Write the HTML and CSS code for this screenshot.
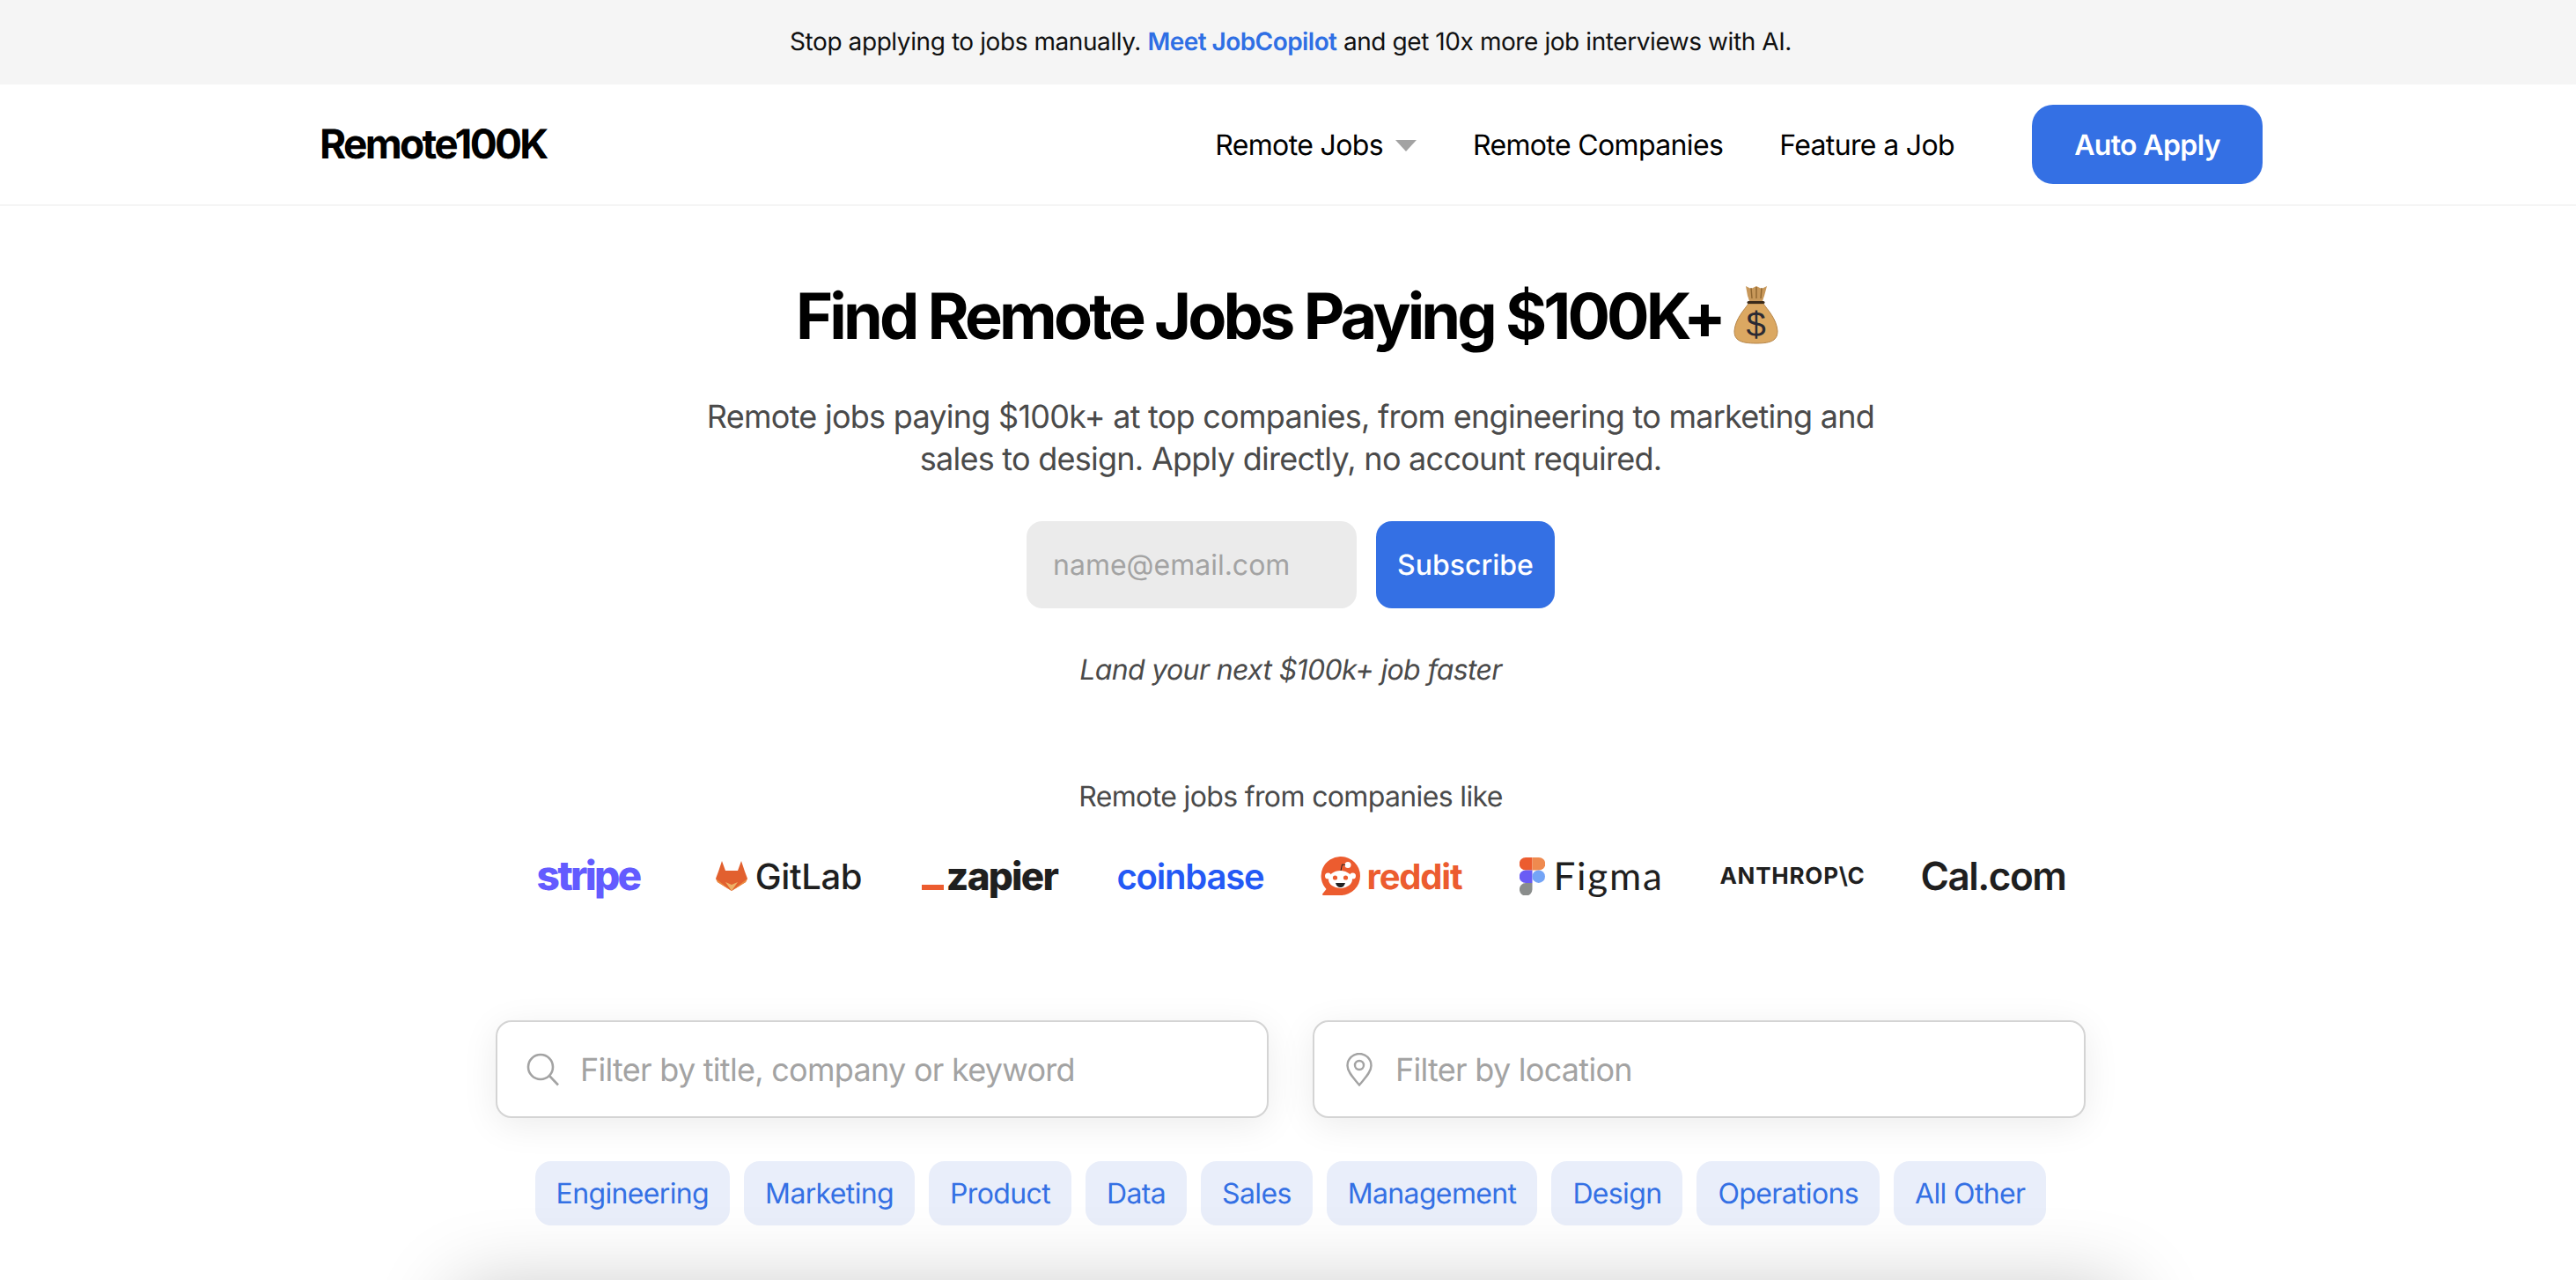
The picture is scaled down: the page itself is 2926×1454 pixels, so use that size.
FILE: index.html
```html
<!DOCTYPE html>
<html lang="en">
<head>
<meta charset="utf-8">
<title>Remote100K</title>
<link rel="stylesheet" href="styles.css">
</head>
<body>
<div class="page">
  <div class="banner">Stop applying to jobs manually.&nbsp;<a class="banner-link" href="#">Meet JobCopilot</a>&nbsp;and get 10x more job interviews with AI.</div>
  <header class="topbar">
    <nav class="nav">
      <a class="brand" href="#">Remote100K</a>
      <div class="nav-links">
        <a class="nav-link" href="#">Remote Jobs<span class="caret"></span></a>
        <a class="nav-link" href="#">Remote Companies</a>
        <a class="nav-link" href="#">Feature a Job</a>
        <a class="cta" href="#">Auto Apply</a>
      </div>
    </nav>
  </header>
  <main class="main">
    <h1 class="title">Find Remote Jobs Paying $100K+<svg class="bag" viewBox="0 0 51 66" aria-hidden="true">
      <path d="M14 1 20 4 26 1 32 4 38 1 35 12C34 15 33 17 33 19H18C18 17 17 15 16 12Z" fill="#c8985a"/>
      <path d="M20 3 21 15M26 2V15M32 3 31 15" stroke="#8f6630" stroke-width="1.4" fill="none"/>
      <path d="M17 21H34C38 27 49 38 50 52 50 62 44 66 26 66 7 66 1 62 1 52 2 38 13 27 17 21Z" fill="#dba862" stroke="#b5854a" stroke-width="1"/>
      <path d="M17 19.5H34" stroke="#3a2a1a" stroke-width="3" stroke-linecap="round"/>
      <text class="bag-sign" x="25.5" y="58" text-anchor="middle">$</text>
    </svg></h1>
    <p class="lead">Remote jobs paying $100k+ at top companies, from engineering to marketing and<br>sales to design. Apply directly, no account required.</p>
    <form class="subscribe">
      <input class="email" type="text" placeholder="name@email.com">
      <button class="subscribe-btn" type="button">Subscribe</button>
    </form>
    <p class="tagline">Land your next $100k+ job faster</p>
    <p class="like">Remote jobs from companies like</p>
    <div class="logos">
      <div class="logo"><span class="l-stripe">stripe</span></div>
      <div class="logo logo-gitlab">
        <svg class="m-gitlab" viewBox="0 0 36 34" aria-hidden="true">
          <path d="M7 0 11 11H25L29 0 33 12 36 20 34 24 18 34 2 24 0 20 3 12Z" fill="#e2602f"/>
          <path d="M0 20 18 34 36 20 34 24 18 34 2 24Z" fill="#ec8a3e"/>
          <path d="M11 24 18 34 25 24 18 27Z" fill="#edb066"/>
        </svg>
        <span class="l-gitlab">GitLab</span>
      </div>
      <div class="logo logo-zapier"><span class="zap-bar"></span><span class="l-zapier">zapier</span></div>
      <div class="logo"><span class="l-coinbase">coinbase</span></div>
      <div class="logo logo-reddit">
        <svg class="m-reddit" viewBox="0 0 45 44" aria-hidden="true">
          <path d="M23 0A22 22 0 1 1 23 44H3C2 44 1.500 43 2.500 42L6.500 37A22 22 0 0 1 23 0Z" fill="#ec5c2f"/>
          <ellipse cx="22.500" cy="26" rx="13.500" ry="10" fill="#fff"/>
          <circle cx="8.500" cy="22" r="3.500" fill="#fff"/>
          <circle cx="36.500" cy="22" r="3.500" fill="#fff"/>
          <circle cx="31" cy="9.500" r="3.500" fill="#fff"/>
          <path d="M23 16 24.500 9 28 9.500" stroke="#222" stroke-width="1" fill="none"/>
          <circle cx="16.500" cy="24" r="2.600" fill="#ec5c2f"/>
          <circle cx="28.500" cy="24" r="2.600" fill="#ec5c2f"/>
          <path d="M17 30H28C27 33.500 25 35 22.500 35 20 35 18 33.500 17 30Z" fill="#222"/>
        </svg>
        <span class="l-reddit">reddit</span>
      </div>
      <div class="logo logo-figma">
        <svg class="m-figma" viewBox="0 0 29 43" aria-hidden="true">
          <path d="M7 0H14.500V14.500H7A7.200 7.200 0 0 1 7 0Z" fill="#ec5c2f"/>
          <path d="M14.500 0H22A7.200 7.200 0 0 1 22 14.500H14.500Z" fill="#ef8a4f"/>
          <path d="M7 14.500H14.500V29H7A7.200 7.200 0 0 1 7 14.500Z" fill="#6a5cf5"/>
          <circle cx="21.700" cy="21.700" r="7.300" fill="#74a4f6"/>
          <path d="M7 29H14.500V36A7.300 7.300 0 1 1 7 29Z" fill="#8a8d8c"/>
        </svg>
        <span class="l-figma">Figma</span>
      </div>
      <div class="logo"><span class="l-anthropic">ANTHROP\C</span></div>
      <div class="logo"><span class="l-cal">Cal.com</span></div>
    </div>
    <div class="filters">
      <label class="filter">
        <svg class="filter-icon" viewBox="0 0 38 38" aria-hidden="true"><circle cx="16" cy="16" r="14" fill="none" stroke="#a3a3a3" stroke-width="2.600"/><path d="M26.500 26.500 36 36.500" stroke="#a3a3a3" stroke-width="2.600" fill="none"/></svg>
        <input class="filter-input" type="text" placeholder="Filter by title, company or keyword">
      </label>
      <label class="filter filter-loc">
        <svg class="filter-icon pin" viewBox="0 0 30 38" aria-hidden="true"><path d="M15 36.500C9 29 1.500 22 1.500 14.500A13.500 13.500 0 0 1 28.500 14.500C28.500 22 21 29 15 36.500Z" fill="none" stroke="#a3a3a3" stroke-width="2.400"/><circle cx="15" cy="14" r="5" fill="none" stroke="#a3a3a3" stroke-width="2.400"/></svg>
        <input class="filter-input" type="text" placeholder="Filter by location">
      </label>
    </div>
    <div class="pills">
      <a class="pill" href="#">Engineering</a>
      <a class="pill" href="#">Marketing</a>
      <a class="pill" href="#">Product</a>
      <a class="pill" href="#">Data</a>
      <a class="pill" href="#">Sales</a>
      <a class="pill" href="#">Management</a>
      <a class="pill" href="#">Design</a>
      <a class="pill" href="#">Operations</a>
      <a class="pill" href="#">All Other</a>
    </div>
    <section class="jobs"></section>
  </main>
</div>
</body>
</html>
```
FILE: styles.css
```css
html, body { margin: 0; padding: 0; overflow: hidden; background: #fff; height: 1454px; }
* { box-sizing: border-box; }
a { text-decoration: none; color: inherit; }
.page { width: 2932px; font-family: Inter, "Liberation Sans", sans-serif; color: #000; text-rendering: geometricPrecision; }

.banner { height: 96px; padding-bottom: 3px; background: #f5f5f5; display: flex; align-items: center; justify-content: center; font-size: 28px; color: #111; letter-spacing: -0.015em; }
.banner-link { color: #2f6fe4; font-weight: 600; letter-spacing: -0.02em; }

.topbar { height: 138px; border-bottom: 2px solid #f5f5f5; }
.nav { width: 2208px; height: 136px; margin: 0 auto; padding-left: 1px; display: flex; align-items: center; justify-content: space-between; }
.brand { font-size: 46px; font-weight: 700; letter-spacing: -0.058em; }
.nav-links { display: flex; align-items: center; gap: 64px; }
.nav-link { font-size: 32px; letter-spacing: -0.02em; display: flex; align-items: center; }
.caret { width: 0; height: 0; margin-left: 14px; margin-top: 2px; border-left: 12px solid transparent; border-right: 12px solid transparent; border-top: 13px solid #a3a3a3; }
.cta { width: 262px; height: 90px; margin-left: 24px; border-radius: 24px; background: #3470e4; color: #fff; font-size: 32px; font-weight: 600; letter-spacing: -0.02em; display: flex; align-items: center; justify-content: center; }

.main { display: flex; flex-direction: column; align-items: center; }
.title { margin: 84px 8px 0 0; height: 84px; font-size: 72px; line-height: 84px; font-weight: 700; letter-spacing: -0.054em; display: flex; align-items: center; }
.bag { width: 51px; height: 66px; margin-left: 12px; margin-top: -6px; overflow: visible; }
.bag-sign { font-family: "Liberation Sans", sans-serif; font-size: 40px; font-weight: 400; fill: #2b2a33; letter-spacing: 0; }
.lead { margin: 47px 0 0; font-size: 36px; line-height: 48px; color: #4a4a4a; text-align: center; letter-spacing: -0.0205em; }
.subscribe { margin-top: 47px; display: flex; gap: 22px; }
.email { width: 375px; height: 99px; border: 0; border-radius: 18px; background: #ebebeb; padding: 0 30px; font: 32px Inter, sans-serif; color: #111; text-rendering: geometricPrecision; }
.email::placeholder { color: #a3a3a3; opacity: 1; }
.subscribe-btn { width: 203px; height: 99px; border: 0; border-radius: 18px; background: #3470e4; color: #fff; font: 500 32px Inter, sans-serif; padding: 0; text-rendering: geometricPrecision; }
.tagline { margin: 50px 0 0; font-size: 32px; line-height: 40px; font-style: italic; color: #4a4a4a; letter-spacing: -0.02em; }
.like { margin: 104px 0 0; font-size: 32px; line-height: 40px; color: #4a4a4a; letter-spacing: -0.02em; }

.logos { margin-top: 38px; width: 1824px; height: 64px; display: grid; grid-template-columns: repeat(8, 228px); align-items: center; justify-items: center; color: #1f1f1f; }
.logo { display: flex; align-items: center; white-space: nowrap; }
.l-stripe { font-size: 46px; font-weight: 800; letter-spacing: -0.06em; color: #635bff; }
.logo-gitlab { gap: 9px; }
.m-gitlab { width: 36px; height: 34px; }
.l-gitlab { font-size: 40px; font-weight: 500; letter-spacing: -0.01em; }
.logo-zapier { gap: 3px; align-items: flex-end; }
.zap-bar { width: 25px; height: 6px; background: #ec5c2f; margin-bottom: 10px; }
.l-zapier { font-size: 44px; line-height: 52px; font-weight: 800; letter-spacing: -0.04em; }
.l-coinbase { font-size: 40px; font-weight: 600; letter-spacing: -0.03em; color: #2459f5; }
.logo-reddit { gap: 8px; }
.m-reddit { width: 45px; height: 44px; }
.l-reddit { font-size: 40px; font-weight: 700; letter-spacing: -0.03em; color: #ec5c2f; }
.logo-figma { gap: 9px; }
.m-figma { width: 29px; height: 43px; }
.l-figma { font-family: Lato, sans-serif; font-size: 44px; letter-spacing: 0.04em; }
.l-anthropic { font-size: 26px; font-weight: 700; letter-spacing: 0.03em; }
.l-cal { font-size: 44px; font-weight: 600; letter-spacing: -0.034em; }

.filters { margin-top: 132px; width: 1806px; display: grid; grid-template-columns: 878px 878px; gap: 50px; }
.filter { height: 111px; border: 2px solid #d4d4d4; border-radius: 18px; background: #fff; box-shadow: 0 8px 40px rgba(0, 0, 0, 0.08); display: flex; align-items: center; padding-left: 33px; gap: 23px; }
.filter-loc { padding-left: 36px; gap: 26px; }
.filter-icon { width: 38px; height: 38px; flex: none; }
.pin { width: 30px; }
.filter-input { flex: 1; min-width: 0; height: 60px; border: 0; background: none; padding: 0; outline: 0; font: 36px Inter, sans-serif; letter-spacing: -0.02em; text-rendering: geometricPrecision; }
.filter-input::placeholder { color: #a3a3a3; opacity: 1; }

.pills { margin-top: 49px; display: flex; gap: 16px; }
.pill { height: 73px; padding: 0 24px; border-radius: 18px; background: #e9eefa; color: #3470e4; font-size: 32px; letter-spacing: -0.02em; display: flex; align-items: center; }

.jobs { margin-top: 70px; width: 1900px; height: 600px; flex: none; border-radius: 24px; background: #fff; box-shadow: 0 0 90px rgba(0, 0, 0, 0.22); }
```
